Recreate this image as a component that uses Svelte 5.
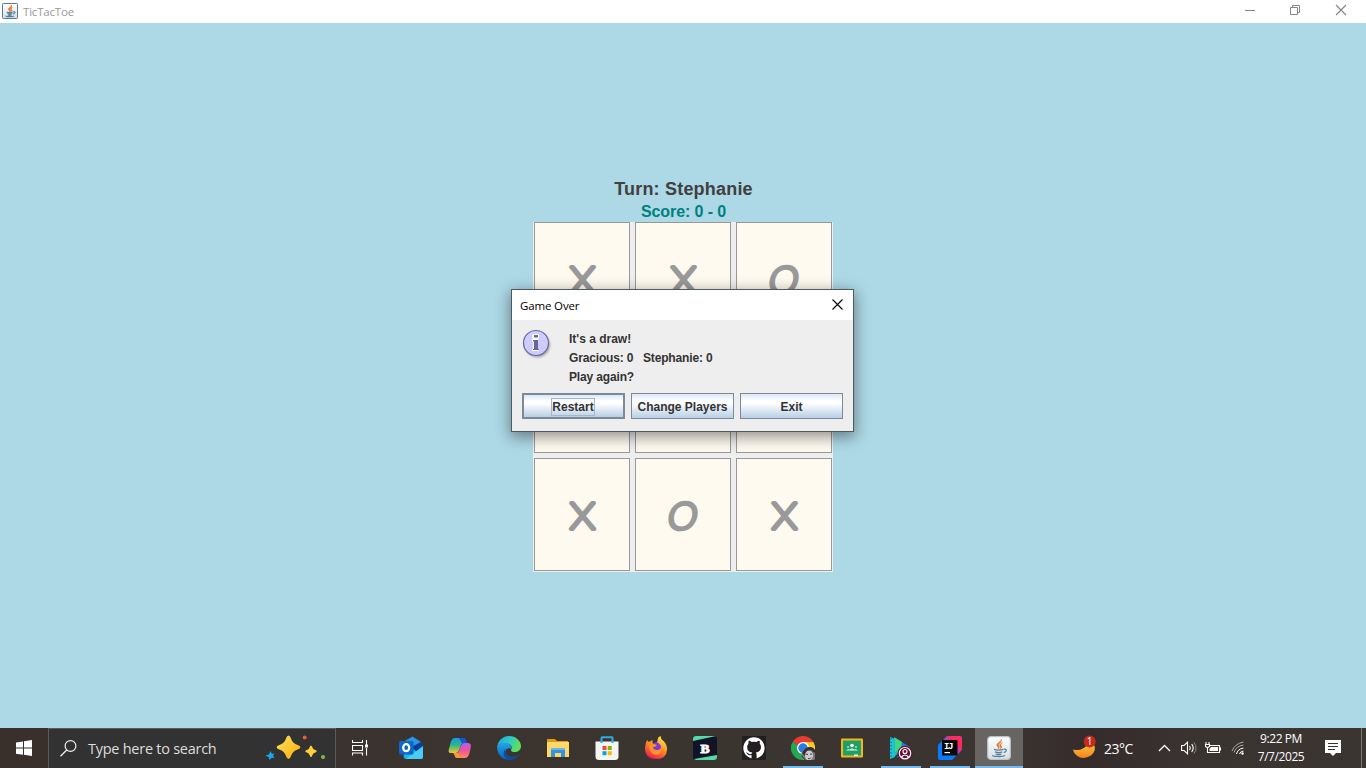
<script>
  const board = ['X', 'X', 'O', '', '', '', 'X', 'O', 'X'];
  const actions = ['Restart', 'Change Players', 'Exit'];
  const apps = [
    { name: 'outlook' }, { name: 'copilot' }, { name: 'edge' }, { name: 'files' },
    { name: 'store' }, { name: 'firefox' }, { name: 'brackets' }, { name: 'github' },
    { name: 'chrome', open: true }, { name: 'classroom' }, { name: 'play', open: true },
    { name: 'idea', open: true }, { name: 'java', open: true, active: true }
  ];
</script>

{#snippet javaIcon(size)}
  <svg width={size} height={size} viewBox="0 0 24 24">
    <defs>
      <linearGradient id="jv" x1="0" y1="0" x2="0" y2="1"><stop offset="0" stop-color="#fff" /><stop offset="1" stop-color="#d9dee2" /></linearGradient>
    </defs>
    <rect x=".7" y=".7" width="22.6" height="22.6" rx={size < 20 ? 1.5 : 3} fill="url(#jv)" stroke={size < 20 ? '#527590' : '#b9c5ce'} stroke-width={size < 20 ? 1.5 : 1.2} />
    <path d="M14.2 3c1 2.6-5 4.2-4.4 6.2.3 1.2 1.8 2 1.7 3.8 1.3-1.4.5-2.4 0-3.4-.8-2 4-3.2 2.7-6.600M15.500 6.500c-3.200 1.500-3.300 3-2.200 4.500.5.8.2 1.300-.3 1.900 2.400-1.200 1.800-2.100 1-3.200-.7-1 .3-2 1.500-3.200z" fill="#e5752b" stroke="#e5752b" stroke-width={size < 20 ? 1.2 : .5} />
    <path d="M7 13.400c2 .9 7 .9 9 0M8 15.800c2 .8 5.500.8 7.300 0M8.700 18c1.600.6 4 .6 5.700 0M6 19.300c-2 1 9.500 2 12 .2M16.500 13.300c4-.9 3.500 2.500.3 3.300" fill="none" stroke="#4f7f9d" stroke-width={size < 20 ? 1.8 : 1.3} />
  </svg>
{/snippet}

{#snippet appIcon(name)}
  {#if name === 'java'}
    {@render javaIcon(24)}
  {:else}
    <svg width="24" height="24" viewBox="0 0 24 24">
      {#if name === 'outlook'}
        <path d="M4 7 13.500 1 24 8v13a2 2 0 0 1-2 2H7a3 3 0 0 1-3-3z" fill="#1b62b5" />
        <path d="M4 6 13.500.5 22 6 9 13l-5-2z" fill="#2797df" />
        <path d="m11 12 12-6.500 1 2.500v7l-10 3z" fill="#0b3d91" />
        <path d="M6 13h8l10 7a3 3 0 0 1-2 3H8a3 3 0 0 1-3-3z" fill="#19b8ee" />
        <path d="M24 10 7 23h15a2 2 0 0 0 2-2z" fill="#48cdf5" />
        <rect y="5" width="14.500" height="13.500" rx="1.500" fill="#0f67ca" />
        <ellipse cx="7.200" cy="11.700" rx="3" ry="3.500" fill="none" stroke="#fff" stroke-width="2.200" />
      {:else if name === 'copilot'}
        <defs>
          <linearGradient id="ca" x1="0" y1="0" x2="0" y2="1"><stop stop-color="#159bea" /><stop offset=".45" stop-color="#2ab58c" /><stop offset="1" stop-color="#edc92c" /></linearGradient>
          <linearGradient id="cb" x1="0" y1="0" x2="0" y2="1"><stop stop-color="#b45df0" /><stop offset=".5" stop-color="#ed559a" /><stop offset="1" stop-color="#ff8c59" /></linearGradient>
        </defs>
        <path d="M7 2h8c3 0 2.500 5 4 5h-4c-3 0-3 10-7 10H3c-4 0-2-4-1-8s2-7 5-7z" fill="url(#ca)" />
        <path d="M11 2h5c2 0 2.500 5 4 5h-6l-2-3z" fill="#1557d2" />
        <path d="M16 7h4c4 0 3 4 2 8s-2 7-5 7H9c-3 0-2-5-4-5h4c3 0 3-10 7-10z" fill="url(#cb)" />
        <path d="M5 17h5l3 5H9c-2 0-2-4-4-5z" fill="#f49a30" />
      {:else if name === 'edge'}
        <defs>
          <linearGradient id="ea" x1="0" y1="0" x2="1" y2=".4"><stop stop-color="#16a4df" /><stop offset=".55" stop-color="#31c9c5" /><stop offset="1" stop-color="#61df58" /></linearGradient>
          <linearGradient id="eb" x1="0" y1="0" x2="0" y2="1"><stop stop-color="#1fa7e5" /><stop offset="1" stop-color="#0c5fc1" /></linearGradient>
        </defs>
        <path d="M.3 11C1 4 6 0 12 0c7 0 12 5 12 10 0 4-3 6-6.500 6-3 0-4-1.300-3.300-2.500 2-3-1-6-4.700-6C5.500 7.500 2 8.500.3 11z" fill="url(#ea)" />
        <path d="M.2 12C0 7 5 6 9 7c4 .8 6 3.500 5.500 6-4-2-7 1-6 5 .7 3 3 5 6 5.600C7 25 .5 20 .2 12z" fill="url(#eb)" />
        <path d="M8.500 13c-1 5 3.500 8 8 7.500 2.500-.3 4-1 6-2.500-2 4-6 6-10 6-5-1-8-7-4-11z" fill="#104ba2" />
      {:else if name === 'files'}
        <path d="M1 3h8l2 2h11v4H1z" fill="#dc9d12" />
        <path d="M1 6h22v15H1z" fill="#ffd668" />
        <path d="M5 13h14v8h-4v-4H9v4H5z" fill="#3592dc" />
        <path d="M5 12h14v2H5z" fill="#64b6ee" />
      {:else if name === 'store'}
        <path d="M.5 5.500h23v15a3.500 3.500 0 0 1-3.500 3.500H4A3.500 3.500 0 0 1 .5 20.500z" fill="#f4f4f4" />
        <path d="M6.500 7V2q0-.7.700-.7h9.600q.7 0 .7.700v5" fill="none" stroke="#28aee9" stroke-width="2" />
        <path d="M7.500 10H11.500v4h-4z" fill="#ef4e23" /><path d="M12.700 10h4v4h-4z" fill="#7ab800" />
        <path d="M7.500 15.200h4v4h-4z" fill="#00a1ed" /><path d="M12.700 15.200h4v4h-4z" fill="#fcb800" />
      {:else if name === 'firefox'}
        <defs><linearGradient id="ff" x1=".8" y1="0" x2=".3" y2="1"><stop stop-color="#fff04c" /><stop offset=".5" stop-color="#ff8b24" /><stop offset="1" stop-color="#ef1657" /></linearGradient></defs>
        <path d="M3 4q1 1 1.500 2Q7 5 8.500 4v3l3 2 2-4q0-4 3-5 0 3 3 5 4 4 3.500 9-.5 9-11 9C4 23 .8 18 1 12q.2-4 2-8z" fill="url(#ff)" />
        <circle cx="12" cy="11.500" r="5" fill="#793ade" />
        <path d="M5 9q4-2 8 0-1 2-4 2 0 3 4 3 3 0 4-2 1 7-5 7-7-1-7-10z" fill="#ff9125" />
      {:else if name === 'brackets'}
        <rect width="24" height="24" rx="3" fill="#101426" />
        <path d="M0 5V3a3 3 0 0 1 3-3h20zM1 23l23-4v2a3 3 0 0 1-3 3H3z" fill="#55dba7" />
        <text x="12" y="16.500" text-anchor="middle" font-family="Liberation Serif, serif" font-size="13.500" font-weight="700" fill="#fff" stroke="#fff" stroke-width="1">B</text>
      {:else if name === 'github'}
        <rect width="24" height="24" fill="#231e20" />
        <circle cx="12" cy="12" r="10.700" fill="#fff" />
        <path d="M9.500 23v-4c-4 1-4-2-5.500-2.300 2-.6 2.500 2.500 5.500 1.300.1-.8.400-1.300.8-1.600C6.800 16 5.200 14.500 5.200 11c0-1.400.5-2.500 1.300-3.300-.3-.8-.2-2 .2-3 1.400 0 2.200.7 3 1.300a10 10 0 0 1 4.800 0c.8-.6 1.600-1.300 3-1.300.4 1 .5 2.200.2 3 .8.8 1.300 1.900 1.300 3.300 0 3.500-1.800 5-5.200 5.400.6.500.8 1.300.8 2.600v4z" fill="#231e20" />
      {:else if name === 'chrome'}
        <path d="M12 12 1.600 6A12 12 0 0 1 22.400 6H12z" fill="#e63c31" />
        <path d="M12 12 1.600 6A12 12 0 0 0 12 24l5-9z" fill="#25a651" />
        <path d="M12 6h10.400A12 12 0 0 1 12 24l5-9z" fill="#fdc923" />
        <circle cx="12" cy="12" r="6" fill="#fff" /><circle cx="12" cy="12" r="4.700" fill="#287bea" />
        <circle cx="18" cy="18.500" r="7.500" fill="#777" />
        <path d="M11 17q3-7 9-6 4 1 5 6l-3-1-2-2-4 3-2 3z" fill="#333" />
        <ellipse cx="18" cy="19.500" rx="4" ry="5" fill="#ccc" /><path d="m14.500 18 2.500.5m2-.2 2-.4M17 22.500q2 1 3-1M11 20l4 5" stroke="#393939" stroke-width="1" fill="none" />
      {:else if name === 'classroom'}
        <rect x="1" y="2.500" width="22" height="19" rx="1" fill="#f4b51f" />
        <rect x="3" y="4.500" width="18" height="15" fill="#1fa163" />
        <circle cx="12" cy="9.500" r="1.800" fill="#fff" /><circle cx="8" cy="11" r="1" fill="#a4dfbf" /><circle cx="16" cy="11" r="1" fill="#a4dfbf" />
        <path d="M6 14.500q2-2 3.500-1 2.500-2 5 0 1.500-1 3.500 1z" fill="#d8f3e4" /><path d="M14 18.500h4v1.500h-4z" fill="#fff" />
      {:else if name === 'play'}
        <path d="M1 1 6 3v18l-5 2z" fill="#1cc5d4" /><path d="m5 1 8 5v8l-8 7z" fill="#21b9c4" /><path d="m11 5 10 6-4 5-9 6 3-9z" fill="#2876e8" /><path d="M6 2 13 6l-1 6-6 4z" fill="#40d979" />
        <path d="M2 2v20" stroke="#135e8e" stroke-dasharray="1.500 2" />
        <circle cx="16" cy="17.200" r="7.500" fill="#641134" /><circle cx="16" cy="17.200" r="5.700" fill="none" stroke="#fff" stroke-width="1.200" /><circle cx="16" cy="15.500" r="2" fill="none" stroke="#fff" stroke-width="1.100" /><path d="M12.500 21q3.500-4 7 0" fill="none" stroke="#fff" stroke-width="1.200" />
      {:else if name === 'idea'}
        <defs><linearGradient id="ij" x1="0" y1="1" x2="1" y2="0"><stop offset=".4" stop-color="#087cff" /><stop offset=".58" stop-color="#8d4ed4" /><stop offset=".75" stop-color="#fe2857" /><stop offset="1" stop-color="#f52e72" /></linearGradient></defs>
        <path d="M0 9 9 0h13a2 2 0 0 1 2 2v12L14 24H2a2 2 0 0 1-2-2z" fill="url(#ij)" />
        <rect x="4" y="4" width="15.500" height="15.500" fill="#080808" />
        <text x="6" y="13" font-family="Liberation Mono, monospace" font-size="9" font-weight="700" letter-spacing="-1.400" fill="#fff">IJ</text><path d="M6.500 16h5.500v1.200H6.500z" fill="#fff" />
      {/if}
    </svg>
  {/if}
{/snippet}

<div class="desktop">
  <header class="titlebar">
    {@render javaIcon(16)}
    <span class="title">TicTacToe</span>
    <div class="controls">
      <svg width="46" height="23"><path d="M19 10.500h10" stroke="#858585" /></svg>
      <svg width="46" height="23"><path d="M18.500 7.500h7v7h-7zM20.500 7.500v-2h7v7h-2" fill="none" stroke="#858585" /></svg>
      <svg width="46" height="23"><path d="m18 5 10 10m0-10-10 10" stroke="#858585" stroke-width="1.100" /></svg>
    </div>
  </header>

  <main class="game">
    <div class="turn">Turn: Stephanie</div>
    <div class="score">Score: 0 - 0</div>
    <div class="board">
      {#each board as mark}
        <div class="cell">
          <svg width="94" height="111" viewBox="-47 -55.5 94 111">
            {#if mark === 'X'}
              <text class="mark" text-anchor="middle" transform="translate(.5 14.500)" textLength="25.500" lengthAdjust="spacingAndGlyphs">X</text>
            {:else if mark === 'O'}
              <text class="mark" text-anchor="middle" transform="translate(-2.300 14.500) skewX(-10)" textLength="30" lengthAdjust="spacingAndGlyphs">O</text>
            {/if}
          </svg>
        </div>
      {/each}
    </div>
  </main>

  <section class="dialog">
    <div class="dialog-title">
      <span>Game Over</span>
      <svg width="11" height="11"><path d="m.5.5 10 10m0-10-10 10" stroke="#000" stroke-width="1.100" /></svg>
    </div>
    <div class="dialog-body">
      <div class="message">
        <svg class="info" width="32" height="32" viewBox="0 0 32 32">
          <defs><filter id="sh"><feGaussianBlur stdDeviation="1.200" /></filter></defs>
          <circle cx="15.500" cy="16" r="12.500" fill="#888" opacity=".7" filter="url(#sh)" />
          <circle cx="14" cy="14" r="12.500" fill="#ccf" stroke="#669" stroke-width="1.200" />
          <path d="M10 5h7v5h-1v10h1v2h-7v-2h1v-7h-1v-3h1V9h-1z" fill="#fff" />
          <path d="M12 6h4v2.500h-4zM11 11h5v9h1v1h-6v-1h1v-7.500h-1z" fill="#669" />
        </svg>
        <div class="lines">
          <div class="draw">It's a draw!</div>
          <div class="pre">Gracious: 0   Stephanie: 0</div>
          <div>Play again?</div>
        </div>
      </div>
      <div class="buttons">
        {#each actions as action, i}
          <button class:focused={i === 0}><span>{action}</span></button>
        {/each}
      </div>
    </div>
  </section>

  <footer class="taskbar">
    <div class="start"><svg width="16" height="16"><path d="M0 2.500 7 1.500v6H0zM8 1.300 16 0v7.500H8zM0 8.500h7v6.200l-7-1zM8 8.500h8V16l-8-1.200z" fill="#fff" /></svg></div>
    <div class="search">
      <svg width="17" height="17"><circle cx="10.500" cy="6" r="5.400" fill="none" stroke="#eee" stroke-width="1.200" /><path d="m6.700 10-6.200 6.200" stroke="#eee" stroke-width="1.300" /></svg>
      <span>Type here to search</span>
      <svg class="sparkles" width="62" height="26" viewBox="0 0 62 26">
        <defs><linearGradient id="st" x1="0" y1="0" x2="1" y2="1"><stop stop-color="#ffe16a" /><stop offset="1" stop-color="#f9ad00" /></linearGradient></defs>
        <path d="M23.500 .5q1.500 0 2.400 2.700 1.500 5 6.800 6.800 2.700 1 2.700 2.200t-2.700 2.200q-5.300 1.600-6.800 6.800-.9 2.700-2.400 2.700t-2.400-2.700q-1.500-5.200-6.800-6.800-2.700-1-2.700-2.200t2.700-2.200q5.300-1.800 6.800-6.800Q22 .5 23.500 .5z" fill="url(#st)" />
        <path d="M46 10.500q.8 0 1.200 1.500.7 2.300 3 3 1.500.5 1.500 1.200t-1.500 1.200q-2.300.7-3 3-.4 1.500-1.200 1.500t-1.200-1.500q-.7-2.300-3-3-1.500-.5-1.500-1.200t1.500-1.200q2.300-.7 3-3 .4-1.500 1.200-1.500z" fill="#ffd03b" />
        <path d="m5.500 16 1.300 2.800 2.700-.3-1.400 2.300L9.500 23l-2.700-.3L4.500 25l-.7-2.700L.5 20.500l3.300-1z" fill="#18a5ed" />
        <circle cx="39.700" cy="2.500" r="2" fill="#ef5b2b" /><circle cx="58" cy="22" r="2" fill="#7fbe42" />
      </svg>
    </div>
    <div class="taskview"><svg width="17" height="16"><path d="M.5 0v2.500h10V0M.5 15.500V13h10v2.500M.5 5.500h10v5H.5zM14.500 0v5M14.500 8v7.500" fill="none" stroke="#fff" stroke-width="1.100" /><path d="M13 4.500h3v3h-3z" fill="#fff" /></svg></div>
    <nav class="apps">
      {#each apps as app}
        <div class="app" class:open={app.open} class:active={app.active}>{@render appIcon(app.name)}</div>
      {/each}
    </nav>
    <div class="tray">
      <svg class="moon" width="27" height="26" viewBox="0 0 27 26">
        <defs><linearGradient id="mn" x1="0" y1="0" x2="0" y2="1"><stop stop-color="#ffc735" /><stop offset="1" stop-color="#ef831f" /></linearGradient></defs>
        <path d="M1 15.500q9 2.500 16-6l5 1q3 6-3 11-6 4-12 1.500-5-2.500-6-7.500z" fill="url(#mn)" />
        <circle cx="17.700" cy="7.500" r="6" fill="#c42b1c" />
        <text x="17.700" y="11" text-anchor="middle" font-family="Open Sans, sans-serif" font-size="10" fill="#fff">1</text>
      </svg>
      <span class="temp">23°C</span>
      <svg class="chevron" width="13" height="8"><path d="m1 7 5.500-5.500L12 7" fill="none" stroke="#fff" stroke-width="1.300" /></svg>
      <svg class="speaker" width="17" height="14" viewBox="0 0 17 14"><path d="M.6 4.500h2.500L6.500 1.200v11.600L3.100 9.500H.6zM8.500 5q1.500 2 0 4M10.700 3.200q3 3.800 0 7.600" fill="none" stroke="#fff" stroke-width="1.100" /><path d="M13 1.500q4 5.500 0 11" fill="none" stroke="#888" /></svg>
      <svg class="battery" width="17" height="12" viewBox="0 0 17 12"><path d="M5 3.500h9.500v7H5M15.500 5.500v3M1 0v2M4 0v2M.5 2.500h4v2q-2 2-4 0zM2.500 5v5.500H5" fill="none" stroke="#fff" stroke-width="1.100" /><path d="M6 5h7v4H4.500V7z" fill="#fff" /></svg>
      <svg class="wifi" width="14" height="14" viewBox="0 0 14 14"><g fill="none"><path d="M1 10Q4 2.500 12.500 1M3 11.500Q5 5 12.500 4" stroke="#aaa" /><path d="M5.500 13Q6.500 8 12.500 7M8.500 13Q9 10.500 12.500 10" stroke="#fff" /></g><circle cx="11.500" cy="12.500" r="1.200" fill="#fff" /></svg>
      <div class="clock"><span>9:22 PM</span><span>7/7/2025</span></div>
      <svg class="notice" width="16" height="16"><path d="M0 0h16v13h-5l-3 3-3-3H0z" fill="#fff" /><path d="M3 3.500h10M3 6.500h10M3 9.500h7" stroke="#38322f" /></svg>
      <div class="peek"></div>
    </div>
  </footer>
</div>

<style>
  :global(body) { margin: 0; overflow: hidden; }
  .desktop { position: relative; display: flex; flex-direction: column; width: 1366px; height: 768px; font-family: "Open Sans", "Noto Sans", sans-serif; background: #add8e6; }
  svg { display: block; flex: none; }
  .titlebar { display: flex; align-items: center; height: 23px; box-sizing: border-box; padding: 0 2px; background: #fff; color: #999; font-size: 12px; }
  .titlebar > :global(svg) { margin-bottom: 2px; }
  .titlebar .title { margin-left: 5px; font-size: 11.500px; letter-spacing: -.2px; line-height: 23px; }
  .controls { display: flex; margin-left: auto; }
  .controls svg { width: 46px; }
  .game { flex: 1; display: flex; flex-direction: column; align-items: center; padding-top: 155px; font-family: "Liberation Sans", Arial, sans-serif; font-weight: 700; }
  .turn { height: 23px; line-height: 22px; font-size: 18px; color: #404040; letter-spacing: .2px; padding-left: 1px; }
  .score { height: 21px; line-height: 21px; font-size: 16px; letter-spacing: -.1px; padding-left: 1px; color: #008080; }
  .board { display: grid; grid-template-columns: repeat(3, 96px); grid-auto-rows: 113px; gap: 5px; padding: 0 1px 1px; background: #eee; }
  .cell { box-sizing: border-box; border: 1px solid #999; background: #fffaf0; }
  .mark { font-family: Inter, "Open Sans", sans-serif; font-size: 35.500px; font-weight: 100; fill: #999; stroke: #999; stroke-width: 4; stroke-linejoin: round; }
  .dialog { position: absolute; left: 511px; top: 289px; width: 343px; height: 143px; box-sizing: border-box; border: 1px solid #4d5b60; background: #eee; box-shadow: 0 4px 14px 1px rgba(0, 0, 0, .42); display: flex; flex-direction: column; }
  .dialog-title { height: 30px; display: flex; align-items: center; justify-content: space-between; padding: 0 10px 0 8px; background: #fff; color: #000; font-size: 11.500px; letter-spacing: -.15px; }
  .dialog-title svg { margin-bottom: 2px; }
  .dialog-body { flex: 1; padding: 9px 10px 0; font: 700 12px "Liberation Sans", Arial, sans-serif; color: #333; }
  .message { display: flex; height: 64px; }
  .lines { margin-left: 15px; padding-top: 1px; line-height: 19px; letter-spacing: -.15px; }
  .draw { letter-spacing: 0; }
  .pre { white-space: pre; }
  .buttons { display: grid; grid-template-columns: repeat(3, 103px); gap: 6px; }
  button { height: 26px; box-sizing: border-box; padding: 2px 0 0; border: 1px solid #7a8a99; border-radius: 0; font: inherit; color: #333; background: linear-gradient(#dde8f3 0%, #fff 30%, #fff 38%, #b8cfe5 100%); white-space: nowrap; }
  button.focused { border-width: 2px; padding-right: 1px; }
  button span { display: inline-block; line-height: 16px; }
  .focused span { outline: 1px solid #a3b8cc; }
  .taskbar { display: flex; height: 40px; background: linear-gradient(90deg, #39302c, #3b3530 50%, #3b3431 74%, #352b2b 80%, #3a3431 88%, #3a3531); color: #fff; }
  .start { width: 48px; display: grid; place-items: center; }
  .search { width: 288px; box-sizing: border-box; border: 1px solid #5c5957; border-bottom-width: 0; background: #323232; display: flex; align-items: center; padding: 0 8px 0 11px; color: #ddd; font-size: 14.500px; }
  .search span { margin-left: 11px; letter-spacing: -.26px; }
  .sparkles { margin: 0 0 1px auto; }
  .taskview { width: 51px; display: flex; align-items: center; box-sizing: border-box; padding-left: 16px; }
  .apps { display: flex; gap: 1px; }
  .app { position: relative; width: 48px; display: grid; place-items: center; }
  .app.active { background: #676462; }
  .app.open::after { content: ""; position: absolute; height: 2px; bottom: 0; left: 4px; right: 4px; background: #76b9ed; }
  .app.active::after { left: 0; right: 0; }
  .tray { display: flex; align-items: center; flex: 1; padding-left: 49px; font-size: 12px; }
  .moon { margin-bottom: 2px; }
  .temp { width: 54px; margin-left: 5px; font-size: 14px; letter-spacing: -.5px; }
  .speaker { margin-left: 10px; }
  .battery { margin-left: 7px; }
  .wifi { margin-left: 9px; }
  .clock { width: 72px; display: flex; flex-direction: column; align-items: center; line-height: 18px; letter-spacing: -.42px; }
  .notice { margin-left: 8px; }
  .peek { width: 1px; height: 40px; margin-left: 20px; background: #777; }
</style>
